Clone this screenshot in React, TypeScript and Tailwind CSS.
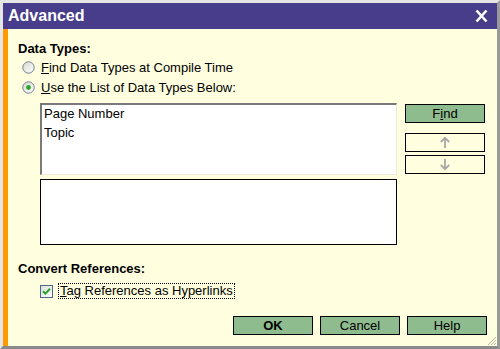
import React from "react";

const font = { fontFamily: '"Liberation Sans", Arial, sans-serif' };

function Radio({ checked }: { checked?: boolean }) {
  return (
    <svg width="13" height="13" viewBox="0 0 13 13" className="shrink-0">
      <defs>
        <linearGradient id={checked ? "rg1" : "rg0"} x1="0" y1="0" x2="1" y2="1">
          <stop offset="0" stopColor="#d8d8d0" />
          <stop offset="1" stopColor="#ffffff" />
        </linearGradient>
      </defs>
      <circle cx="6.5" cy="6.5" r="5.7" fill={`url(#${checked ? "rg1" : "rg0"})`} stroke="#6f7f90" strokeWidth="1" />
      {checked && <circle cx="6.5" cy="6.5" r="2.4" fill="#2ea52e" />}
    </svg>
  );
}

function Checkbox() {
  return (
    <svg width="13" height="13" viewBox="0 0 13 13" className="shrink-0">
      <defs>
        <linearGradient id="cbg" x1="0" y1="0" x2="1" y2="1">
          <stop offset="0" stopColor="#dcdcd6" />
          <stop offset="1" stopColor="#ffffff" />
        </linearGradient>
      </defs>
      <rect x="0.5" y="0.5" width="12" height="12" fill="url(#cbg)" stroke="#4a6a8a" />
      <path d="M3 6.2 L5.4 8.6 L10 3.8" fill="none" stroke="#25a325" strokeWidth="2" />
    </svg>
  );
}

function Btn({ children, bold, green = true }: { children: React.ReactNode; bold?: boolean; green?: boolean }) {
  return (
    <div
      className={`w-[80px] h-[19px] border border-black flex items-center justify-center text-[13px] leading-none ${
        green ? "bg-[#8fbc8f]" : "bg-[#ffffe0]"
      } ${bold ? "font-bold" : ""}`}
    >
      {children}
    </div>
  );
}

function Arrow({ up }: { up?: boolean }) {
  return (
    <svg width="12" height="13" viewBox="0 0 12 13">
      {up ? (
        <path d="M6 12 V1.8 M1.8 6 L6 1.8 L10.2 6" fill="none" stroke="#a8a8a8" strokeWidth="1.8" />
      ) : (
        <path d="M6 1 V11.2 M1.8 7 L6 11.2 L10.2 7" fill="none" stroke="#a8a8a8" strokeWidth="1.8" />
      )}
    </svg>
  );
}

export default function App() {
  return (
    <div
      style={font}
      className="w-[500px] h-[349px] flex flex-col bg-[#d6d3ce] border-t-[3px] border-l-[3px] border-t-[#e6e6e6] border-l-[#e6e6e6] border-r-[3px] border-r-[#9a9a9a] border-b-[3px] border-b-[#8a8a8a] text-black"
    >
      <div className="h-[26px] shrink-0 bg-[#483d8b] flex items-center justify-between pl-[5px] pr-[7px]">
        <span className="text-white font-bold text-[16px] leading-none">Advanced</span>
        <svg width="17" height="14" viewBox="0 0 17 14">
          <path d="M3.5 1.5 L13.5 12.5 M13.5 1.5 L3.5 12.5" stroke="#ffffff" strokeWidth="2.6" />
        </svg>
      </div>
      <div className="flex-1 flex min-h-0">
        <div className="w-[5px] bg-[#ff9a00] shrink-0" />
        <div className="flex-1 bg-[#ffffe0] relative flex flex-col pt-[12px] pl-[10px] pr-[10px] text-[13px] leading-[15px]">
          <div className="font-bold">Data Types:</div>
          <div className="flex items-center mt-[4px] pl-[4px] gap-[6px]">
            <Radio />
            <span>
              <span className="underline">F</span>ind Data Types at Compile Time
            </span>
          </div>
          <div className="flex items-center mt-[5px] pl-[4px] gap-[6px]">
            <Radio checked />
            <span>
              <span className="underline">U</span>se the List of Data Types Below:
            </span>
          </div>
          <div className="flex mt-[8px] pl-[22px] gap-[8px]">
            <div className="flex flex-col gap-[4px] w-[357px]">
              <div className="h-[72px] bg-white border-t-2 border-l-2 border-t-[#7a7a7a] border-l-[#7a7a7a] border-b border-r border-b-[#ecebd8] border-r-[#ecebd8] pl-[2px]">
                <div className="h-[19px] leading-[17px]">Page Number</div>
                <div className="h-[19px] leading-[17px]">Topic</div>
              </div>
              <div className="h-[66px] bg-white border border-black" />
            </div>
            <div className="flex flex-col pt-[1px]">
              <Btn>
                <span>
                  F<span className="underline">i</span>nd
                </span>
              </Btn>
              <div className="mt-[10px]">
                <Btn green={false}>
                  <Arrow up />
                </Btn>
              </div>
              <div className="mt-[3px]">
                <Btn green={false}>
                  <Arrow />
                </Btn>
              </div>
            </div>
          </div>
          <div className="font-bold mt-[16px]">Convert References:</div>
          <div className="flex items-center mt-[7px] pl-[22px] gap-[5px]">
            <Checkbox />
            <span className="border border-dotted border-black px-[1px] h-[16px] leading-[14px]">
              <span className="underline">T</span>ag References as Hyperlinks
            </span>
          </div>
          <div className="flex justify-end gap-[7px] mt-[17px]">
            <Btn bold>OK</Btn>
            <Btn>Cancel</Btn>
            <Btn>Help</Btn>
          </div>
          <svg className="absolute right-0 bottom-0" width="11" height="11" viewBox="0 0 11 11">
            <path d="M10 2 L2 10 M10 5 L5 10 M10 8 L8 10" stroke="#b0b0a0" strokeWidth="1" />
          </svg>
        </div>
      </div>
    </div>
  );
}
